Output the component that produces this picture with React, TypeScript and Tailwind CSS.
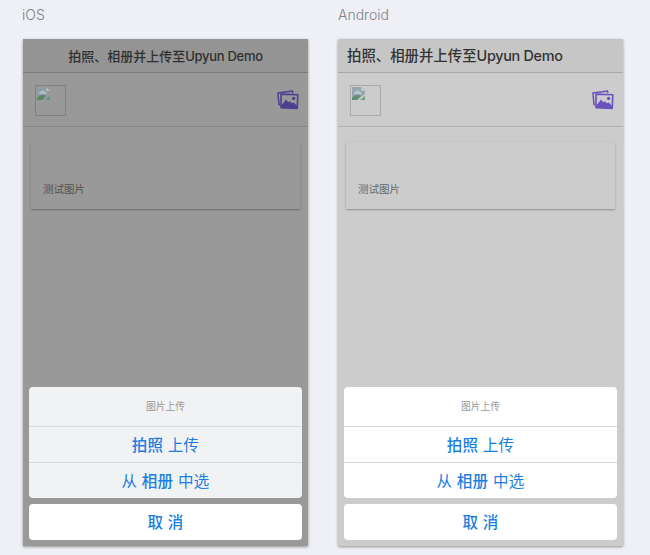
import React from 'react';
import { clsx } from 'clsx';

type Platform = 'ios' | 'android';

const ImagesIcon = ({ className }: { className?: string }) => (
    <svg viewBox="0 0 22 20" className={className} fill="none" stroke="currentColor">
        <path d="M3.4 14.4 2 14.6 0.9 2.9 15.6 1.1 15.9 3.1" strokeWidth="1.5" strokeLinejoin="round" />
        <path d="M4 4.1 20.8 4.8 20.2 18.4 4 17.6Z" strokeWidth="1.6" strokeLinejoin="round" />
        <path d="M4.2 17.6V15.2L6.4 13 9 9.6 11.2 12.3 12.6 11.2 15 13.3 16.6 12.5 20.2 16 20.1 18.3Z" fill="currentColor" stroke="none" />
        <circle cx="16.6" cy="8.4" r="1.6" fill="currentColor" stroke="none" />
    </svg>
);

const BrokenImage = ({ className }: { className?: string }) => (
    <div className={clsx('mt-px h-[31px] w-[31px] border p-px', className)}>
        <svg viewBox="0 0 14 14" className="h-3.5 w-3.5 opacity-80">
            <path d="M0 0H9L13 4V7L5 13H0Z" fill="#8b9cab" />
            <path d="M2 6Q2 4 4 4.5 6 2 8 5 10 5 10 7H2Z" fill="#b4c2cb" />
            <path d="M0 11Q4 6 9 9L5 13H0Z" fill="#438354" />
            <path d="M9 0V4H13Z" fill="#bcc5cb" />
            <path d="M8 13 13 9V13Z" fill="#54966a" />
        </svg>
    </div>
);

const ActionSheet = ({ platform }: { platform: Platform }) => (
    <div className="mt-auto px-1.5 pb-1.5 text-center text-[15.5px] text-[#1c7fe0]">
        <div
            className={clsx(
                'overflow-hidden rounded',
                platform === 'ios' ? 'bg-[#f1f2f4]' : 'bg-white'
            )}
        >
            <div className="h-[39px] text-[9.8px] leading-[39px] text-[#999]">图片上传</div>
            <div className="h-9 border-t border-[#d8d9db] leading-[38px] tracking-[0.2px]">
                <b className="font-medium">拍照</b> 上传
            </div>
            <div className="h-9 border-t border-[#d8d9db] leading-[38px] tracking-[0.25px]">
                从 <b className="font-medium">相册</b> 中选
            </div>
        </div>
        <div className="mt-1.5 h-9 rounded bg-white font-medium leading-[37px] tracking-[0.3px]">取 消</div>
    </div>
);

const Phone = ({ platform, label }: { platform: Platform; label: string }) => {
    const ios = platform === 'ios';

    return (
        <section className="w-[285px]">
            <h2 className="h-[39px] pt-1 text-[14px] font-light leading-[21px] text-[#7f838a]">
                <span className={clsx(ios && '-ml-px')}>{label}</span>
            </h2>
            <div
                className={clsx(
                    'flex h-[507px] flex-col rounded-[1px] shadow-[0_1px_3px_rgba(0,0,0,0.4)]',
                    ios ? 'bg-[#999999]' : 'bg-[#cccccc]'
                )}
            >
                <header
                    className={clsx(
                        'h-[34px] border-b font-medium leading-[34px] whitespace-nowrap',
                        ios
                            ? 'border-[#7d7d7d] bg-[#949494] text-center text-[13px] text-[#303030]'
                            : 'border-[#a8a8a8] bg-[#c6c6c6] pl-[9px] text-[14.4px] text-[#333]'
                    )}
                >
                    拍照、相册并上传至<span className="tracking-[-0.3px]">Upyun Demo</span>
                </header>
                <div
                    className={clsx(
                        'flex h-[54px] items-center justify-between border-b pl-3 pr-[9px]',
                        ios ? 'border-[#858585] text-[#4f3d91]' : 'border-[#b0b0b0] text-[#6a52bd]'
                    )}
                >
                    <BrokenImage className={ios ? 'border-[#808080]' : 'border-[#aaaaaa]'} />
                    <ImagesIcon className="h-5 w-[22px]" />
                </div>
                <div
                    className={clsx(
                        'mx-2 mt-[15px] h-[67px] rounded-[1px] px-3 pt-10 text-[10.5px] leading-4 shadow-[0_1px_2px_rgba(0,0,0,0.3)]',
                        ios ? 'text-[#505050]' : 'text-[#686868]'
                    )}
                >
                    测试图片
                </div>
                <ActionSheet platform={platform} />
            </div>
        </section>
    );
};

export default function App() {
    return (
        <main className="flex h-[555px] w-[650px] gap-[30px] overflow-hidden bg-[#eef0f5] pl-[23px] font-['Inter','Noto_Sans_CJK_SC',sans-serif]">
            <Phone platform="ios" label="iOS" />
            <Phone platform="android" label="Android" />
        </main>
    );
}
